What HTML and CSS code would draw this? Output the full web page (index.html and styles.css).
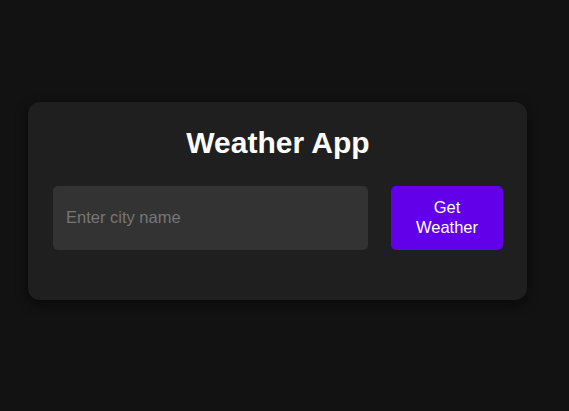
FILE: index.html
```html
<!DOCTYPE html>
<html lang="en">
<head>
<meta charset="utf-8">
<title>Weather App</title>
<link rel="stylesheet" href="styles.css">
</head>
<body>
<main class="card">
  <h1 class="title">Weather App</h1>
  <div class="search">
    <input class="city" type="text" placeholder="Enter city name">
    <button class="btn" type="button">Get Weather</button>
  </div>
</main>
</body>
</html>
```
FILE: styles.css
```css
* { box-sizing: border-box; }
html, body { margin: 0; padding: 0; }
body {
  background: #121212;
  font-family: "Liberation Sans", Arial, sans-serif;
  color: #ffffff;
  height: 411px;
  padding: 102px 0 0 28px;
}
.card {
  width: 499px;
  background: #1f1f1f;
  border-radius: 12px;
  padding: 22px 24px 50px 25px;
  box-shadow: 0 4px 12px rgba(0, 0, 0, 0.5);
}
.title {
  margin: 0 0 25px;
  font-size: 30px;
  font-weight: bold;
  text-align: center;
  line-height: 37px;
}
.search {
  display: flex;
  gap: 23px;
  align-items: stretch;
}
.city {
  flex: 1;
  min-width: 0;
  background: #333333;
  border: none;
  border-radius: 5px;
  padding: 0 13px 1px;
  font-family: inherit;
  font-size: 16.5px;
  color: #ffffff;
  outline: none;
}
.city::placeholder { color: #777777; }
.btn {
  width: 112px;
  background: #6200ea;
  color: #ffffff;
  border: none;
  border-radius: 5px;
  padding: 11px 20px 13px;
  font-family: inherit;
  font-size: 16.5px;
  line-height: 20px;
}
```
